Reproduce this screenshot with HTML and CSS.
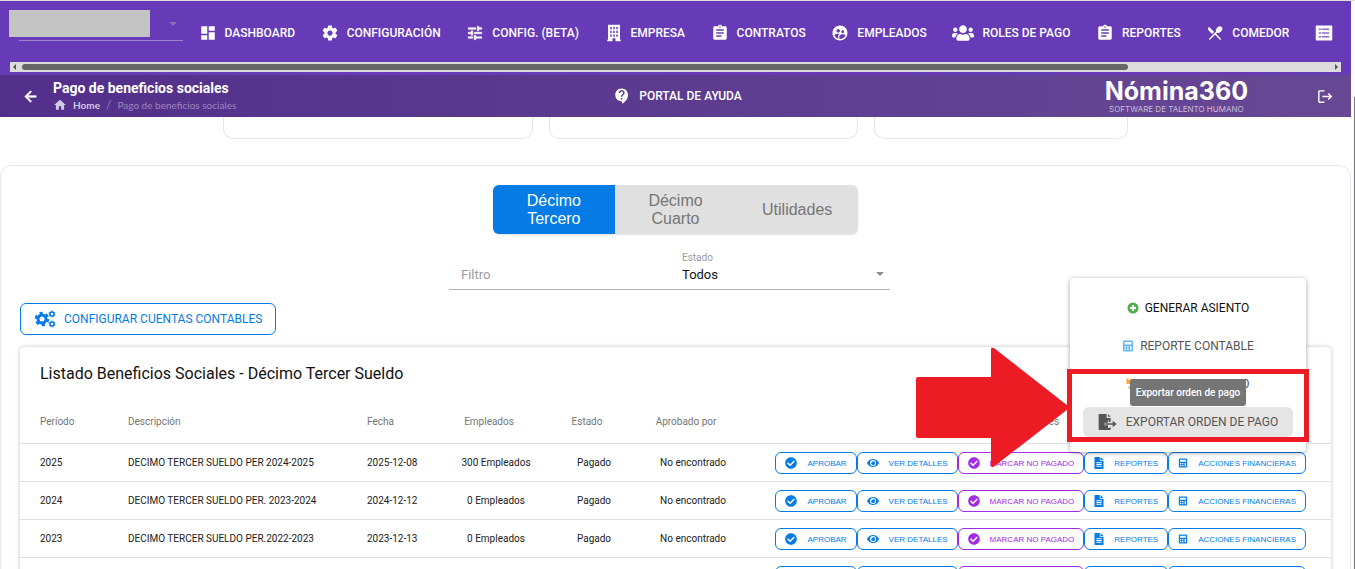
FILE: index.html
```html
<!DOCTYPE html>
<html lang="es">
<head>
    <meta charset="UTF-8">
    <meta name="viewport" content="width=device-width, initial-scale=1.0">
    <title>Pago de beneficios sociales</title>
    <link rel="stylesheet" href="styles.css">
</head>
<body>

    <!-- Icon set -->
    <svg class="sprite" aria-hidden="true">
        <symbol id="i-dashboard" viewBox="0 0 24 24"><path d="M3 13h8V3H3v10zm0 8h8v-6H3v6zm10 0h8V11h-8v10zm0-18v6h8V3h-8z"/></symbol>
        <symbol id="i-settings" viewBox="0 0 24 24"><path d="M19.43 12.98c.04-.32.07-.64.07-.98s-.03-.66-.07-.98l2.11-1.65c.19-.15.24-.42.12-.64l-2-3.46c-.12-.22-.39-.3-.61-.22l-2.49 1c-.52-.4-1.08-.73-1.69-.98l-.38-2.65C14.46 2.18 14.25 2 14 2h-4c-.25 0-.46.18-.49.42l-.38 2.65c-.61.25-1.17.59-1.69.98l-2.49-1c-.23-.09-.49 0-.61.22l-2 3.46c-.13.22-.07.49.12.64l2.11 1.65c-.04.32-.07.65-.07.98s.03.66.07.98l-2.11 1.65c-.19.15-.24.42-.12.64l2 3.46c.12.22.39.3.61.22l2.49-1c.52.4 1.08.73 1.69.98l.38 2.65c.03.24.24.42.49.42h4c.25 0 .46-.18.49-.42l.38-2.65c.61-.25 1.17-.59 1.69-.98l2.49 1c.23.09.49 0 .61-.22l2-3.46c.12-.22.07-.49-.12-.64l-2.11-1.65zM12 15.5c-1.93 0-3.5-1.57-3.5-3.5s1.57-3.5 3.5-3.5 3.5 1.57 3.5 3.5-1.57 3.5-3.5 3.5z"/></symbol>
        <symbol id="i-tune" viewBox="0 0 24 24"><path stroke="currentColor" stroke-width="0.8" d="M3 17v2h6v-2H3zM3 5v2h10V5H3zm10 16v-2h8v-2h-8v-2h-2v6h2zM7 9v2H3v2h4v2h2V9H7zm14 4v-2H11v2h10zm-6-4h2V7h4V5h-4V3h-2v6z"/></symbol>
        <symbol id="i-building" viewBox="0 0 24 24"><path fill-rule="evenodd" d="M4 1h16v20h1v2h-7v-4h-4v4H3v-2h1V1zm3 3v3h2V4H7zm4 0v3h2V4h-2zm4 0v3h2V4h-2zM7 9v3h2V9H7zm4 0v3h2V9h-2zm4 0v3h2V9h-2zm-8 5v3h2v-3H7zm4 0v3h2v-3h-2zm4 0v3h2v-3h-2z"/></symbol>
        <symbol id="i-assignment" viewBox="0 0 24 24"><path d="M19 3h-4.180C14.400 1.840 13.300 1 12 1c-1.300 0-2.400.840-2.820 2H5c-1.100 0-2 .9-2 2v14c0 1.100.9 2 2 2h14c1.100 0 2-.9 2-2V5c0-1.100-.9-2-2-2zm-7 0c.55 0 1 .45 1 1s-.45 1-1 1-1-.45-1-1 .45-1 1-1zm2 14H7v-2h7v2zm3-4H7v-2h10v2zm0-4H7V7h10v2z"/></symbol>
        <symbol id="i-people-circle" viewBox="0 0 24 24"><path d="M11.99 2c-5.520 0-10 4.480-10 10s4.480 10 10 10 10-4.480 10-10-4.480-10-10-10zm3.610 6.340c1.070 0 1.930.86 1.930 1.930 0 1.070-.86 1.930-1.930 1.930-1.070 0-1.930-.86-1.930-1.930-.01-1.070.86-1.930 1.930-1.930zm-6-1.580c1.300 0 2.360 1.060 2.360 2.360 0 1.300-1.060 2.360-2.360 2.360s-2.360-1.060-2.360-2.360c0-1.310 1.050-2.360 2.360-2.360zm0 9.130v3.750c-2.400-.75-4.300-2.600-5.140-4.960 1.050-1.120 3.670-1.690 5.140-1.690.53 0 1.200.08 1.900.22-1.640.87-1.900 2.020-1.900 2.680zM11.990 20c-.27 0-.53-.01-.79-.04v-4.070c0-1.420 2.940-2.130 4.400-2.130 1.070 0 2.920.39 3.840 1.150-1.170 2.970-4.060 5.090-7.450 5.090z"/></symbol>
        <symbol id="i-users" viewBox="0 0 640 512"><path d="M96 224c35.300 0 64-28.700 64-64s-28.700-64-64-64-64 28.700-64 64 28.700 64 64 64zm448 0c35.300 0 64-28.700 64-64s-28.700-64-64-64-64 28.700-64 64 28.700 64 64 64zm32 32h-64c-17.600 0-33.500 7.100-45.100 18.600 40.300 22.100 68.900 62 75.100 109.400h66c17.700 0 32-14.300 32-32v-32c0-35.300-28.700-64-64-64zm-256 0c61.900 0 112-50.100 112-112S381.900 32 320 32 208 82.100 208 144s50.100 112 112 112zm76.800 32h-8.300c-20.800 10-43.900 16-68.500 16s-47.600-6-68.500-16h-8.300C179.600 288 128 339.600 128 403.200V432c0 26.500 21.500 48 48 48h288c26.500 0 48-21.500 48-48v-28.800c0-63.600-51.600-115.200-115.200-115.200zm-223.700-13.400C161.500 263.100 145.600 256 128 256H64c-35.300 0-64 28.700-64 64v32c0 17.700 14.300 32 32 32h65.900c6.300-47.400 34.900-87.300 75.200-109.400z"/></symbol>
        <symbol id="i-restaurant" viewBox="0 0 24 24"><path d="M8.100 13.340l2.830-2.830L3.910 3.500c-1.560 1.560-1.560 4.090 0 5.660l4.190 4.180zm6.780-1.810c1.530.71 3.680.21 5.270-1.380 1.910-1.910 2.280-4.650.81-6.120-1.460-1.460-4.200-1.100-6.120.81-1.590 1.590-2.090 3.740-1.380 5.270L3.700 19.870l1.410 1.410L12 14.410l6.880 6.880 1.410-1.410L13.410 13l1.470-1.470z"/></symbol>
        <symbol id="i-list" viewBox="0 0 24 24"><path d="M2 2h20a1 1 0 0 1 1 1v18a1 1 0 0 1-1 1H2a1 1 0 0 1-1-1V3a1 1 0 0 1 1-1z"/><path fill="#8e6bcb" d="M5 6h3v2H5zm4 0h10v2H9zm-4 5h3v2H5zm4 0h10v2H9zm-4 5h3v2H5zm4 0h10v2H9z"/></symbol>
        <symbol id="i-help" viewBox="0 0 24 24"><path d="M11.500 2C6.810 2 3 5.810 3 10.500S6.810 19 11.500 19h.5v3c4.860-2.340 8-7 8-11.500C20 5.810 16.190 2 11.500 2zm1 14.500h-2v-2h2v2zm0-3.500h-2c0-3.250 3-3 3-5 0-1.100-.9-2-2-2s-2 .9-2 2h-2c0-2.210 1.790-4 4-4s4 1.790 4 4c0 2.500-3 2.750-3 5z"/></symbol>
        <symbol id="i-back" viewBox="0 0 24 24"><path stroke="currentColor" d="M20 11H7.830l5.590-5.590L12 4l-8 8 8 8 1.410-1.410L7.830 13H20v-2z"/></symbol>
        <symbol id="i-home" viewBox="0 0 24 24"><path d="M10 20v-6h4v6h5v-8h3L12 3 2 12h3v8z"/></symbol>
        <symbol id="i-logout" viewBox="0 0 24 24"><path d="M12 3H5a2 2 0 0 0-2 2v14a2 2 0 0 0 2 2h7v-2H5V5h7V3zm6 4l-1.400 1.400 2.600 2.600H9v2h10.200l-2.600 2.600L18 17l5-5-5-5z"/></symbol>
        <symbol id="i-check" viewBox="0 0 512 512"><path d="M504 256c0 136.967-111.033 248-248 248S8 392.967 8 256 119.033 8 256 8s248 111.033 248 248zM227.314 387.314l184-184c6.248-6.248 6.248-16.379 0-22.627l-22.627-22.627c-6.248-6.249-16.379-6.249-22.628 0L216 308.118l-70.059-70.059c-6.248-6.248-16.379-6.248-22.628 0l-22.627 22.627c-6.248 6.248-6.248 16.379 0 22.627l104 104c6.249 6.249 16.379 6.249 22.628.001z"/></symbol>
        <symbol id="i-eye" viewBox="0 0 576 512"><path d="M572.520 241.400C518.290 135.590 410.930 64 288 64S57.680 135.640 3.480 241.410a32.350 32.350 0 0 0 0 29.190C57.710 376.410 165.070 448 288 448s230.320-71.640 284.520-177.410a32.350 32.350 0 0 0 0-29.190zM288 400a144 144 0 1 1 144-144 143.930 143.930 0 0 1-144 144zm0-240a95.310 95.310 0 0 0-25.310 3.790 47.850 47.850 0 0 1-66.900 66.900A95.780 95.780 0 1 0 288 160z"/></symbol>
        <symbol id="i-file" viewBox="0 0 384 512"><path fill-rule="evenodd" d="M224 0H24C11 0 0 11 0 24v464c0 13 11 24 24 24h336c13 0 24-11 24-24V160H224V0zm32 0v128h128L256 0zM80 224h224v44H80v-44zm0 76h224v44H80v-44zm0 76h224v44H80v-44z"/></symbol>
        <symbol id="i-calculator" viewBox="0 0 24 24"><path fill-rule="evenodd" d="M4 1h16a2 2 0 0 1 2 2v18a2 2 0 0 1-2 2H4a2 2 0 0 1-2-2V3a2 2 0 0 1 2-2zm1 3v5h14V4H5zm0 8v3h3v-3H5zm5 0v3h3v-3h-3zm6 0v8h3v-8h-3zM5 17v3h3v-3H5zm5 0v3h3v-3h-3z"/></symbol>
        <symbol id="i-plus" viewBox="0 0 24 24"><path fill-rule="evenodd" d="M12 1a11 11 0 1 0 0 22 11 11 0 0 0 0-22zm-2 5h4v4h4v4h-4v4h-4v-4H6v-4h4V6z"/></symbol>
        <symbol id="i-undo" viewBox="0 0 24 24"><path d="M1 1h4v4a11 11 0 1 1-1 14l3-3a7 7 0 1 0 1-8h5v4H1V1z"/></symbol>
        <symbol id="i-export" viewBox="0 0 28 24"><path d="M1 0h11v6h6v6h-3V9l-1 0v4H9v4h5v4h2l2-2v4a1 1 0 0 1-1 1H1a1 1 0 0 1-1-1V1a1 1 0 0 1 1-1zm13 0l4 4h-4V0z"/><path d="M10 14h11v-4l6 5-6 5v-4H10z"/></symbol>
        <symbol id="i-cogs" viewBox="0 0 22 18">
            <circle cx="8" cy="9" r="4" fill="none" stroke="currentColor" stroke-width="3"/>
            <circle cx="8" cy="9" r="6" fill="none" stroke="currentColor" stroke-width="2.600" stroke-dasharray="3.140 3.140"/>
            <circle cx="18" cy="4" r="2" fill="none" stroke="currentColor" stroke-width="1.600"/>
            <circle cx="18" cy="4" r="3" fill="none" stroke="currentColor" stroke-width="1" stroke-dasharray="1.570 1.570"/>
            <circle cx="18" cy="14" r="2" fill="none" stroke="currentColor" stroke-width="1.600"/>
            <circle cx="18" cy="14" r="3" fill="none" stroke="currentColor" stroke-width="1" stroke-dasharray="1.570 1.570"/>
        </symbol>
    </svg>

    <div class="app">

        <!-- Main Navigation -->
        <nav class="navbar">
            <div class="nav-row">
                <div class="company">
                    <select class="company-select" aria-label="Empresa"><option></option></select>
                    <span class="caret"></span>
                    <span class="company-mask"></span>
                </div>
                <a class="nav-link" href="#"><svg><use href="#i-dashboard"/></svg>DASHBOARD</a>
                <a class="nav-link" href="#"><svg><use href="#i-settings"/></svg>CONFIGURACIÓN</a>
                <a class="nav-link" href="#"><svg><use href="#i-tune"/></svg>CONFIG. (BETA)</a>
                <a class="nav-link" href="#"><svg><use href="#i-building"/></svg>EMPRESA</a>
                <a class="nav-link" href="#"><svg><use href="#i-assignment"/></svg>CONTRATOS</a>
                <a class="nav-link" href="#"><svg><use href="#i-people-circle"/></svg>EMPLEADOS</a>
                <a class="nav-link" href="#"><svg class="wide"><use href="#i-users"/></svg>ROLES DE PAGO</a>
                <a class="nav-link" href="#"><svg><use href="#i-assignment"/></svg>REPORTES</a>
                <a class="nav-link" href="#"><svg><use href="#i-restaurant"/></svg>COMEDOR</a>
                <a class="nav-link" href="#" aria-label="Lista"><svg><use href="#i-list"/></svg></a>
            </div>
            <div class="scroll-x">
                <span class="scroll-arrow left"></span>
                <span class="scroll-track"><span class="scroll-thumb"></span></span>
                <span class="scroll-arrow right"></span>
            </div>
        </nav>

        <!-- Page Header -->
        <header class="topbar">
            <div class="topbar-left">
                <a class="back" href="#" aria-label="Volver"><svg><use href="#i-back"/></svg></a>
                <div>
                    <h1>Pago de beneficios sociales</h1>
                    <div class="breadcrumb">
                        <svg><use href="#i-home"/></svg>
                        <a href="#">Home</a>
                        <span class="slash">/</span>
                        <span>Pago de beneficios sociales</span>
                    </div>
                </div>
            </div>
            <a class="nav-link help" href="#"><svg><use href="#i-help"/></svg>PORTAL DE AYUDA</a>
            <div class="topbar-right">
                <div class="logo">
                    <strong>Nómina360</strong>
                    <small>SOFTWARE DE TALENTO HUMANO</small>
                </div>
                <a class="logout" href="#" aria-label="Salir"><svg><use href="#i-logout"/></svg></a>
            </div>
        </header>

        <main>
            <!-- Summary Cards -->
            <div class="cards">
                <div class="card"></div>
                <div class="card"></div>
                <div class="card small"></div>
            </div>

            <section class="panel">
                <!-- Tabs -->
                <div class="tabs">
                    <button class="tab active">Décimo Tercero</button>
                    <button class="tab">Décimo Cuarto</button>
                    <button class="tab">Utilidades</button>
                </div>

                <!-- Filters -->
                <div class="filters-row">
                    <div class="filters">
                        <input type="text" class="filter-text" placeholder="Filtro" aria-label="Filtro">
                        <div class="filter-state">
                            <label for="estado">Estado</label>
                            <select id="estado"><option>Todos</option></select>
                            <span class="caret"></span>
                        </div>
                    </div>
                </div>

                <button class="config-btn"><svg><use href="#i-cogs"/></svg>CONFIGURAR CUENTAS CONTABLES</button>

                <!-- Benefits Table -->
                <div class="list">
                    <h2>Listado Beneficios Sociales - Décimo Tercer Sueldo</h2>
                    <table>
                        <thead>
                            <tr>
                                <th class="col-period">Período</th>
                                <th class="col-desc">Descripción</th>
                                <th class="col-date">Fecha</th>
                                <th class="col-emp">Empleados</th>
                                <th class="col-state">Estado</th>
                                <th class="col-approved">Aprobado por</th>
                                <th class="col-actions">Acciones</th>
                            </tr>
                        </thead>
                        <tbody>
                            <tr>
                                <td>2025</td>
                                <td>DECIMO TERCER SUELDO PER 2024-2025</td>
                                <td>2025-12-08</td>
                                <td>300 Empleados</td>
                                <td>Pagado</td>
                                <td>No encontrado</td>
                                <td>
                                    <div class="actions">
                                        <button class="btn"><svg><use href="#i-check"/></svg>APROBAR</button>
                                        <button class="btn"><svg><use href="#i-eye"/></svg>VER DETALLES</button>
                                        <button class="btn purple"><svg><use href="#i-check"/></svg>MARCAR NO PAGADO</button>
                                        <button class="btn"><svg class="narrow"><use href="#i-file"/></svg>REPORTES</button>
                                        <button class="btn"><svg class="narrow"><use href="#i-calculator"/></svg>ACCIONES FINANCIERAS</button>

                                        <!-- Financial actions menu -->
                                        <div class="menu">
                                            <button class="menu-item strong"><svg class="green"><use href="#i-plus"/></svg>GENERAR ASIENTO</button>
                                            <button class="menu-item"><svg class="sky"><use href="#i-calculator"/></svg>REPORTE CONTABLE</button>
                                            <button class="menu-item"><svg class="orange"><use href="#i-undo"/></svg>REVERTIR ASIENTO</button>
                                            <button class="menu-item hovered"><svg><use href="#i-export"/></svg>EXPORTAR ORDEN DE PAGO</button>
                                            <span class="tooltip">Exportar orden de pago</span>
                                            <span class="highlight"></span>
                                            <svg class="arrow" viewBox="0 0 154 121"><path d="M2 30h73V2q0-2 3-1l76 59.500L78 119.500q-3 2-3-1V91H2q-2 0-2-2V32q0-2 2-2z"/></svg>
                                        </div>
                                    </div>
                                </td>
                            </tr>
                            <tr>
                                <td>2024</td>
                                <td>DECIMO TERCER SUELDO PER. 2023-2024</td>
                                <td>2024-12-12</td>
                                <td>0 Empleados</td>
                                <td>Pagado</td>
                                <td>No encontrado</td>
                                <td>
                                    <div class="actions">
                                        <button class="btn"><svg><use href="#i-check"/></svg>APROBAR</button>
                                        <button class="btn"><svg><use href="#i-eye"/></svg>VER DETALLES</button>
                                        <button class="btn purple"><svg><use href="#i-check"/></svg>MARCAR NO PAGADO</button>
                                        <button class="btn"><svg class="narrow"><use href="#i-file"/></svg>REPORTES</button>
                                        <button class="btn"><svg class="narrow"><use href="#i-calculator"/></svg>ACCIONES FINANCIERAS</button>
                                    </div>
                                </td>
                            </tr>
                            <tr>
                                <td>2023</td>
                                <td>DECIMO TERCER SUELDO PER.2022-2023</td>
                                <td>2023-12-13</td>
                                <td>0 Empleados</td>
                                <td>Pagado</td>
                                <td>No encontrado</td>
                                <td>
                                    <div class="actions">
                                        <button class="btn"><svg><use href="#i-check"/></svg>APROBAR</button>
                                        <button class="btn"><svg><use href="#i-eye"/></svg>VER DETALLES</button>
                                        <button class="btn purple"><svg><use href="#i-check"/></svg>MARCAR NO PAGADO</button>
                                        <button class="btn"><svg class="narrow"><use href="#i-file"/></svg>REPORTES</button>
                                        <button class="btn"><svg class="narrow"><use href="#i-calculator"/></svg>ACCIONES FINANCIERAS</button>
                                    </div>
                                </td>
                            </tr>
                            <tr>
                                <td></td>
                                <td></td>
                                <td></td>
                                <td></td>
                                <td></td>
                                <td></td>
                                <td>
                                    <div class="actions">
                                        <button class="btn"><svg><use href="#i-check"/></svg>APROBAR</button>
                                        <button class="btn"><svg><use href="#i-eye"/></svg>VER DETALLES</button>
                                        <button class="btn purple"><svg><use href="#i-check"/></svg>MARCAR NO PAGADO</button>
                                        <button class="btn"><svg class="narrow"><use href="#i-file"/></svg>REPORTES</button>
                                        <button class="btn"><svg class="narrow"><use href="#i-calculator"/></svg>ACCIONES FINANCIERAS</button>
                                    </div>
                                </td>
                            </tr>
                        </tbody>
                    </table>
                </div>
            </section>
        </main>
    </div>

    <div class="scroll-y"><span></span></div>

</body>
</html>
```
FILE: styles.css
```css
/* Basic Reset */
* {
    margin: 0;
    padding: 0;
    box-sizing: border-box;
}

body {
    display: flex;
    height: 100vh;
    overflow: hidden;
    font-family: Roboto, sans-serif;
    font-size: 10px;
    color: #212121;
    background-color: white;
}

button,
select,
input {
    font-family: inherit;
    background: none;
    border: none;
    outline: none;
}

select {
    appearance: none;
}

a {
    color: inherit;
    text-decoration: none;
}

svg {
    fill: currentColor;
    flex-shrink: 0;
}

.sprite {
    display: none;
}

.app {
    flex: 1;
    min-width: 0;
    border-top: 1px solid #dedede;
}

.caret {
    border: 4px solid transparent;
    border-top-color: #8e8e8e;
    border-bottom: none;
}

/* Main Navigation */
.navbar {
    padding-bottom: 3px;
    background-color: #673ab7;
    color: white;
    overflow: hidden;
}

.nav-row {
    display: flex;
    align-items: center;
    justify-content: space-between;
    gap: 25px;
    height: 61px;
    padding: 2px 18px 0 19px;
}

.company {
    position: relative;
    display: flex;
    align-items: center;
    flex-shrink: 0;
    width: 164px;
    height: 32px;
    margin-right: -10px;
    margin-bottom: 16px;
    padding-right: 6px;
    border-bottom: 1px solid #9c82c9;
}

.company-select {
    flex: 1;
    height: 30px;
}

.company .caret {
    border-top-color: #8a72b5;
}

.company-mask {
    position: absolute;
    left: -10px;
    top: 1px;
    width: 141px;
    height: 27px;
    background-color: #c4c4c4;
}

.nav-link {
    display: flex;
    align-items: center;
    gap: 8px;
    flex-shrink: 0;
    font-size: 12px;
    font-weight: 500;
    white-space: nowrap;
}

.nav-link svg {
    width: 18px;
    height: 18px;
}

.nav-link svg.wide {
    width: 22px;
}

/* Horizontal scrollbar */
.scroll-x {
    display: flex;
    align-items: center;
    height: 10px;
    margin: 0 10px;
    padding: 0 3px;
    background-color: #dcdcdc;
}

.scroll-track {
    flex: 1;
    height: 6px;
    margin: 0 12px 0 6px;
}

.scroll-thumb {
    display: block;
    width: 85%;
    height: 6px;
    border-radius: 3px;
    background-color: #666;
}

.scroll-arrow {
    border: 3px solid transparent;
}

.scroll-arrow.left {
    border-left: none;
    border-right-color: #555;
}

.scroll-arrow.right {
    border-right: none;
    border-left-color: #555;
}

/* Page Header */
.topbar {
    display: flex;
    align-items: center;
    justify-content: space-between;
    height: 42px;
    padding: 0 18px 0 22px;
    background: linear-gradient(90deg, #522f8b, #674894);
    color: white;
}

.topbar-left,
.topbar-right {
    display: flex;
    flex: 1;
    align-items: center;
}

.topbar-left {
    gap: 14px;
}

.topbar-right {
    justify-content: flex-end;
    gap: 68px;
}

.back svg,
.logout svg {
    display: block;
    width: 17px;
    height: 17px;
}

.topbar h1 {
    font-size: 14px;
    font-weight: 700;
    line-height: 18px;
}

.breadcrumb {
    display: flex;
    align-items: center;
    gap: 6px;
    font-family: Lato, sans-serif;
    font-size: 10px;
    line-height: 16px;
    color: #9b85bb;
}

.breadcrumb svg {
    width: 14px;
    height: 14px;
    color: #d4c9e4;
}

.breadcrumb a {
    font-weight: 700;
    color: #d4c9e4;
}

.breadcrumb .slash {
    font-size: 12px;
}

.logo {
    display: flex;
    flex-direction: column;
    align-items: center;
    font-family: Inter, sans-serif;
}

.logo strong {
    font-size: 25px;
    line-height: 26px;
}

.logo small {
    font-size: 8px;
    line-height: 10px;
    color: #c9bddb;
}

/* Summary Cards */
.cards {
    display: flex;
    gap: 16px;
    width: 67%;
    height: 22px;
    margin: 0 auto 26px;
}

.card {
    flex: 11;
    border: 1px solid #e2e6f2;
    border-top: none;
    border-radius: 0 0 10px 10px;
}

.card.small {
    flex: 9;
}

/* Panel */
.panel {
    padding: 19px 19px 0;
    border: 1px solid #e2e6f2;
    border-radius: 12px 12px 0 0;
}

.tabs {
    display: flex;
    width: 365px;
    margin: 0 auto;
    border-radius: 6px;
    overflow: hidden;
    background-color: #e0e0e0;
    box-shadow: 0 1px 2px rgba(0, 0, 0, 0.12);
}

.tab {
    flex: 1;
    height: 49px;
    padding: 0 24px;
    font-family: "Liberation Sans", Arial, sans-serif;
    font-size: 16px;
    line-height: 18px;
    color: #757575;
}

.tab.active {
    background-color: #047be5;
    color: white;
}

/* Filters */
.filters-row {
    display: flex;
    justify-content: center;
    padding: 14px 12px 13px 0;
}

.filters {
    display: flex;
    align-items: flex-end;
    width: 441px;
    height: 42px;
    border-bottom: 1px solid #b5b5b5;
}

.filter-text {
    width: 221px;
    height: 30px;
    padding-left: 12px;
    font-size: 13px;
}

.filter-text::placeholder {
    color: #9a9a9a;
}

.filter-state {
    position: relative;
    flex: 1;
    padding-left: 12px;
}

.filter-state label {
    display: block;
    line-height: 12px;
    color: #9a9a9a;
}

.filter-state select {
    width: 100%;
    height: 20px;
    margin-bottom: 5px;
    font-size: 13px;
    color: #111;
}

.filter-state .caret {
    position: absolute;
    right: 6px;
    bottom: 13px;
}

.config-btn {
    display: flex;
    align-items: center;
    gap: 8px;
    height: 32px;
    padding: 0 13px;
    border: 1px solid #047be5;
    border-radius: 6px;
    font-size: 12px;
    color: #047be5;
}

.config-btn svg {
    width: 22px;
    height: 18px;
}

/* Benefits Table */
.list {
    margin-top: 12px;
    border-radius: 4px;
    box-shadow: 0 0 4px rgba(0, 0, 0, 0.25);
}

.list h2 {
    padding: 0 20px;
    font-size: 16px;
    font-weight: 400;
    line-height: 53px;
    color: #111;
}

table {
    width: 100%;
    table-layout: fixed;
    border-collapse: collapse;
}

th,
td {
    height: 38px;
    padding: 0 0 0 20px;
    border-bottom: 1px solid #e0e0e0;
    font-size: 10px;
    text-align: left;
    white-space: nowrap;
}

th {
    height: 43px;
    font-weight: 400;
    color: #757575;
}

.col-period {
    width: 88px;
}

.col-desc {
    width: 239px;
}

.col-date {
    width: 97px;
}

.col-emp {
    width: 104px;
}

.col-state {
    width: 92px;
}

.col-approved {
    width: 106px;
}

th:nth-child(n+4),
td:nth-child(n+4) {
    padding: 0;
    text-align: center;
}

th:nth-child(n+4):not(.col-actions) {
    padding-right: 14px;
}

.actions {
    position: relative;
    display: flex;
    justify-content: flex-end;
    padding: 2px 25px 0 0;
}

.btn {
    display: flex;
    align-items: center;
    gap: 10px;
    height: 22px;
    padding: 0 9px;
    border: 1px solid #047be5;
    border-radius: 6px;
    font-family: "Liberation Sans", Arial, sans-serif;
    font-size: 8px;
    white-space: nowrap;
    color: #047be5;
}

.btn svg {
    width: 12px;
    height: 12px;
}

.btn svg.narrow {
    width: 10px;
}

.btn.purple {
    border-color: #a22ce8;
    color: #a22ce8;
}

/* Financial actions menu */
.menu {
    position: absolute;
    right: 25px;
    bottom: 22px;
    z-index: 2;
    display: flex;
    flex-direction: column;
    align-items: center;
    gap: 8px;
    width: 236px;
    padding: 15px 13px;
    border-radius: 4px;
    background-color: white;
    box-shadow: 0 1px 5px rgba(0, 0, 0, 0.35);
}

.menu-item {
    display: flex;
    align-items: center;
    justify-content: center;
    gap: 6px;
    width: 100%;
    height: 30px;
    border-radius: 6px;
    font-size: 12px;
    color: #555;
}

.menu-item.strong {
    color: #111;
}

.menu-item svg {
    width: 12px;
    height: 12px;
}

.menu-item.hovered {
    gap: 8px;
    background-color: #e5e5e5;
}

.menu-item.hovered svg {
    width: 20px;
    height: 16px;
}

.menu-item .green {
    color: #4caf50;
}

.menu-item .sky {
    color: #64b5f6;
}

.menu-item .orange {
    color: #ffa726;
}

.tooltip {
    position: absolute;
    left: 60px;
    top: 101px;
    width: 116px;
    border-radius: 3px;
    background-color: #757575;
    color: white;
    font-size: 10px;
    font-weight: 500;
    line-height: 27px;
}

.highlight {
    position: absolute;
    left: -3px;
    right: -3px;
    top: 91px;
    height: 73px;
    border: 5px solid #ed1c24;
}

.arrow {
    position: absolute;
    right: 100%;
    top: 69px;
    width: 154px;
    height: 121px;
    fill: #ed1c24;
}

/* Page scrollbar */
.scroll-y {
    width: 4px;
    padding-top: 96px;
    border-top: 1px solid #dedede;
}

.scroll-y span {
    display: block;
    height: 100%;
    border-right: 1px solid #777;
}
```
